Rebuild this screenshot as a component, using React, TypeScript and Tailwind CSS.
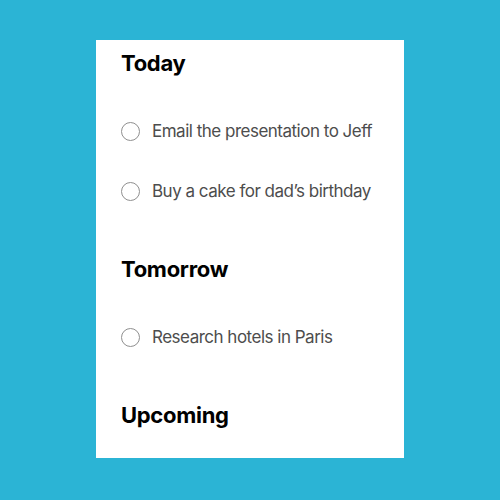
const sections = [
  { title: "Today", items: ["Email the presentation to Jeff", "Buy a cake for dad’s birthday"] },
  { title: "Tomorrow", items: ["Research hotels in Paris"] },
  { title: "Upcoming", items: [] as string[] },
];

export default function App() {
  return (
    <div className="w-[500px] h-[500px] bg-[#2bb4d5] pt-10 pl-24 font-['Inter',sans-serif]">
      <div className="w-[308px] h-[418px] bg-white pt-[9px] pl-[25px] flex flex-col gap-[52px]">
        {sections.map((s) => (
          <section key={s.title}>
            <h2 className="text-[22px] leading-[28px] font-bold text-black tracking-[-0.3px]">{s.title}</h2>
            {s.items.length > 0 && (
              <ul className="mt-[42px] flex flex-col gap-9">
                {s.items.map((item) => (
                  <li key={item} className="flex items-center gap-3 h-6">
                    <span className="w-[19px] h-[19px] rounded-full border border-[#8f8f8f] shrink-0" />
                    <span className="text-[17px] leading-6 text-[#4d4d4d] tracking-[-0.5px]">{item}</span>
                  </li>
                ))}
              </ul>
            )}
          </section>
        ))}
      </div>
    </div>
  );
}
